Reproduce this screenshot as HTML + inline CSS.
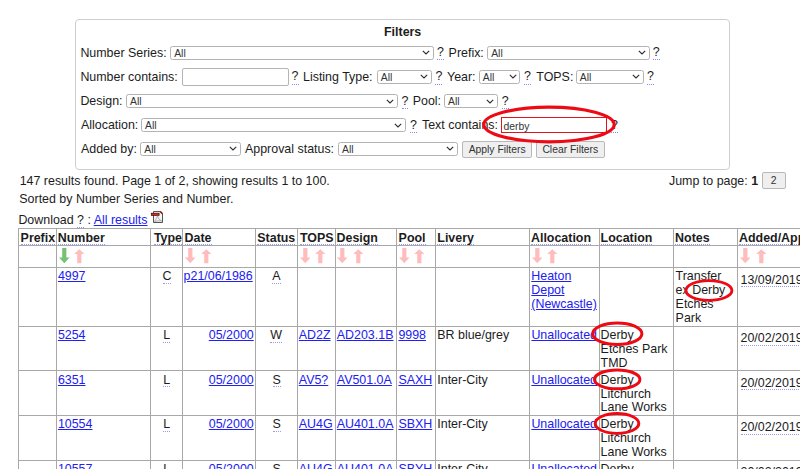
<!DOCTYPE html>
<html><head><meta charset="utf-8"><style>
html,body{margin:0;padding:0}
body{width:800px;height:469px;overflow:hidden;position:relative;background:#fff;font-family:"Liberation Sans",sans-serif;font-size:12.43px;color:#1c1c1c}
.t{position:absolute;white-space:pre}
.q{border-bottom:1px dotted #8c8cf0}
.lk{color:#2020f0;text-decoration:underline}
.ab,.ab2,.ab3{border-bottom:1px dotted #9a9af0}
.ab3{padding-right:80px}
.sel{position:absolute;box-sizing:border-box;border:1px solid #b3b3b3;border-radius:2.5px;background:#fff;font-size:10.36px;color:#222}
.inp{position:absolute;box-sizing:border-box;border:1px solid #b5b5b5;border-radius:2px;background:#fff;font-size:10.36px}
.inpr{position:absolute;box-sizing:border-box;border:1.4px solid #e0141e;background:#fff;font-size:10.36px;color:#333}
.btn{position:absolute;box-sizing:border-box;border:1px solid #b8b8b8;border-radius:2px;background:#efefef;font-size:10.36px;text-align:center;color:#333}
</style></head><body>
<div style="position:absolute;left:75.00px;top:18.50px;width:655.00px;height:151.00px;box-sizing:border-box;border:1px solid #cfcfcf;border-radius:4px"></div>
<span class="t" style="left:384.00px;top:25.05px;line-height:14.282px;font-weight:bold;">Filters</span>
<span class="t" style="left:80.40px;top:45.55px;line-height:14.282px;">Number Series:</span>
<div class="sel" style="left:170.20px;top:45.60px;width:263.60px;height:14.25px"><svg width="8" height="5" viewBox="0 0 8 5" style="position:absolute;right:2.9px;top:3.425px"><path d="M0.8 0.9 L4 4 L7.2 0.9" fill="none" stroke="#2a2a2a" stroke-width="1.1"/></svg></div>
<span class="t" style="left:174.20px;top:47.61px;font-size:10.36px;line-height:11.904px;color:#333;">All</span>
<span class="t q" style="left:437.00px;top:46.04px;line-height:13.3px;">?</span>
<span class="t" style="left:448.60px;top:45.55px;line-height:14.282px;">Prefix:</span>
<div class="sel" style="left:487.20px;top:45.60px;width:162.90px;height:14.25px"><svg width="8" height="5" viewBox="0 0 8 5" style="position:absolute;right:2.9px;top:3.425px"><path d="M0.8 0.9 L4 4 L7.2 0.9" fill="none" stroke="#2a2a2a" stroke-width="1.1"/></svg></div>
<span class="t" style="left:491.20px;top:47.61px;font-size:10.36px;line-height:11.904px;color:#333;">All</span>
<span class="t q" style="left:652.70px;top:46.04px;line-height:13.3px;">?</span>
<span class="t" style="left:80.40px;top:69.85px;line-height:14.282px;">Number contains:</span>
<div class="inp" style="left:181.80px;top:68.00px;width:107.20px;height:17.60px"></div>
<span class="t q" style="left:291.60px;top:70.34px;line-height:13.3px;">?</span>
<span class="t" style="left:303.00px;top:69.85px;line-height:14.282px;">Listing Type:</span>
<div class="sel" style="left:376.85px;top:69.90px;width:54.90px;height:14.25px"><svg width="8" height="5" viewBox="0 0 8 5" style="position:absolute;right:2.9px;top:3.425px"><path d="M0.8 0.9 L4 4 L7.2 0.9" fill="none" stroke="#2a2a2a" stroke-width="1.1"/></svg></div>
<span class="t" style="left:380.85px;top:71.91px;font-size:10.36px;line-height:11.904px;color:#333;">All</span>
<span class="t q" style="left:435.40px;top:70.34px;line-height:13.3px;">?</span>
<span class="t" style="left:447.00px;top:69.85px;line-height:14.282px;">Year:</span>
<div class="sel" style="left:478.80px;top:69.90px;width:41.70px;height:14.25px"><svg width="8" height="5" viewBox="0 0 8 5" style="position:absolute;right:2.9px;top:3.425px"><path d="M0.8 0.9 L4 4 L7.2 0.9" fill="none" stroke="#2a2a2a" stroke-width="1.1"/></svg></div>
<span class="t" style="left:482.80px;top:71.91px;font-size:10.36px;line-height:11.904px;color:#333;">All</span>
<span class="t q" style="left:524.00px;top:70.34px;line-height:13.3px;">?</span>
<span class="t" style="left:536.30px;top:69.85px;line-height:14.282px;">TOPS:</span>
<div class="sel" style="left:575.80px;top:69.90px;width:68.35px;height:14.25px"><svg width="8" height="5" viewBox="0 0 8 5" style="position:absolute;right:2.9px;top:3.425px"><path d="M0.8 0.9 L4 4 L7.2 0.9" fill="none" stroke="#2a2a2a" stroke-width="1.1"/></svg></div>
<span class="t" style="left:579.80px;top:71.91px;font-size:10.36px;line-height:11.904px;color:#333;">All</span>
<span class="t q" style="left:647.00px;top:70.34px;line-height:13.3px;">?</span>
<span class="t" style="left:80.40px;top:94.05px;line-height:14.282px;">Design:</span>
<div class="sel" style="left:126.00px;top:94.10px;width:271.70px;height:14.25px"><svg width="8" height="5" viewBox="0 0 8 5" style="position:absolute;right:2.9px;top:3.425px"><path d="M0.8 0.9 L4 4 L7.2 0.9" fill="none" stroke="#2a2a2a" stroke-width="1.1"/></svg></div>
<span class="t" style="left:130.00px;top:96.11px;font-size:10.36px;line-height:11.904px;color:#333;">All</span>
<span class="t q" style="left:401.50px;top:94.54px;line-height:13.3px;">?</span>
<span class="t" style="left:412.70px;top:94.05px;line-height:14.282px;">Pool:</span>
<div class="sel" style="left:444.10px;top:94.10px;width:53.90px;height:14.25px"><svg width="8" height="5" viewBox="0 0 8 5" style="position:absolute;right:2.9px;top:3.425px"><path d="M0.8 0.9 L4 4 L7.2 0.9" fill="none" stroke="#2a2a2a" stroke-width="1.1"/></svg></div>
<span class="t" style="left:448.10px;top:96.11px;font-size:10.36px;line-height:11.904px;color:#333;">All</span>
<span class="t q" style="left:501.80px;top:94.54px;line-height:13.3px;">?</span>
<span class="t" style="left:81.00px;top:118.15px;line-height:14.282px;">Allocation:</span>
<div class="sel" style="left:141.00px;top:118.20px;width:264.75px;height:14.25px"><svg width="8" height="5" viewBox="0 0 8 5" style="position:absolute;right:2.9px;top:3.425000000000007px"><path d="M0.8 0.9 L4 4 L7.2 0.9" fill="none" stroke="#2a2a2a" stroke-width="1.1"/></svg></div>
<span class="t" style="left:145.00px;top:120.21px;font-size:10.36px;line-height:11.904px;color:#333;">All</span>
<span class="t q" style="left:409.90px;top:118.64px;line-height:13.3px;">?</span>
<span class="t" style="left:422.00px;top:118.15px;line-height:14.282px;">Text contains:</span>
<div class="inpr" style="left:500.60px;top:116.90px;width:106.70px;height:16.20px"></div>
<span class="t" style="left:503.60px;top:120.66px;font-size:10.36px;line-height:11.904px;color:#333;">derby</span>
<span class="t q" style="left:611.00px;top:118.64px;line-height:13.3px;">?</span>
<span class="t" style="left:81.00px;top:141.85px;line-height:14.282px;">Added by:</span>
<div class="sel" style="left:140.30px;top:141.90px;width:100.70px;height:14.25px"><svg width="8" height="5" viewBox="0 0 8 5" style="position:absolute;right:2.9px;top:3.425px"><path d="M0.8 0.9 L4 4 L7.2 0.9" fill="none" stroke="#2a2a2a" stroke-width="1.1"/></svg></div>
<span class="t" style="left:144.30px;top:143.91px;font-size:10.36px;line-height:11.904px;color:#333;">All</span>
<span class="t" style="left:245.00px;top:141.85px;line-height:14.282px;">Approval status:</span>
<div class="sel" style="left:338.10px;top:141.90px;width:120.05px;height:14.25px"><svg width="8" height="5" viewBox="0 0 8 5" style="position:absolute;right:2.9px;top:3.425px"><path d="M0.8 0.9 L4 4 L7.2 0.9" fill="none" stroke="#2a2a2a" stroke-width="1.1"/></svg></div>
<span class="t" style="left:342.10px;top:143.91px;font-size:10.36px;line-height:11.904px;color:#333;">All</span>
<div class="btn" style="left:462.00px;top:141.20px;width:70.30px;height:16.75px;line-height:16.75px">Apply Filters</div>
<div class="btn" style="left:535.80px;top:141.20px;width:69.00px;height:16.75px;line-height:16.75px">Clear Filters</div>
<span class="t" style="left:19.70px;top:173.55px;line-height:14.282px;">147 results found. Page 1 of 2, showing results 1 to 100.</span>
<span class="t" style="left:19.30px;top:192.35px;line-height:14.282px;">Sorted by Number Series and Number.</span>
<span class="t" style="left:18.40px;top:212.55px;line-height:14.282px;">Download <span class="q">?</span> : <span class="lk">All results</span></span>
<span class="t" style="left:669.00px;top:173.65px;line-height:14.282px;">Jump to page: <b>1</b></span>
<div class="btn" style="left:761.50px;top:172.40px;width:24.50px;height:16.40px;line-height:16.40px">2</div>
<svg style="position:absolute;left:150px;top:210px" width="14" height="14" viewBox="0 0 14 14">
<path d="M3.5 1.5 H10.5 L12.5 3.5 V12.5 H3.5 Z" fill="#f4f4f4" stroke="#555" stroke-width="1"/>
<path d="M10.2 1.5 L12.5 3.8" stroke="#8a1010" stroke-width="1.6"/>
<rect x="1.3" y="3.2" width="7.8" height="2.2" fill="#d8261a" stroke="#3a0a0a" stroke-width="0.7"/>
<path d="M4.6 11.6 C6 9 7.2 7 7.6 5.8 C8 8 9.5 10 11.6 11 C9 10.6 7 10.8 4.6 11.6 Z" fill="none" stroke="#9a9a9a" stroke-width="0.8"/>
</svg>
<div style="position:absolute;left:17.90px;top:228.00px;width:1.00px;height:241.00px;background:#a8a8a8"></div>
<div style="position:absolute;left:55.90px;top:228.00px;width:1.00px;height:241.00px;background:#a8a8a8"></div>
<div style="position:absolute;left:150.20px;top:228.00px;width:1.00px;height:241.00px;background:#a8a8a8"></div>
<div style="position:absolute;left:181.80px;top:228.00px;width:1.00px;height:241.00px;background:#a8a8a8"></div>
<div style="position:absolute;left:255.00px;top:228.00px;width:1.00px;height:241.00px;background:#a8a8a8"></div>
<div style="position:absolute;left:297.00px;top:228.00px;width:1.00px;height:241.00px;background:#a8a8a8"></div>
<div style="position:absolute;left:334.50px;top:228.00px;width:1.00px;height:241.00px;background:#a8a8a8"></div>
<div style="position:absolute;left:395.70px;top:228.00px;width:1.00px;height:241.00px;background:#a8a8a8"></div>
<div style="position:absolute;left:435.00px;top:228.00px;width:1.00px;height:241.00px;background:#a8a8a8"></div>
<div style="position:absolute;left:529.00px;top:228.00px;width:1.00px;height:241.00px;background:#a8a8a8"></div>
<div style="position:absolute;left:598.70px;top:228.00px;width:1.00px;height:241.00px;background:#a8a8a8"></div>
<div style="position:absolute;left:673.10px;top:228.00px;width:1.00px;height:241.00px;background:#a8a8a8"></div>
<div style="position:absolute;left:737.10px;top:228.00px;width:1.00px;height:241.00px;background:#a8a8a8"></div>
<div style="position:absolute;left:17.90px;top:228.00px;width:782.10px;height:1.00px;background:#a8a8a8"></div>
<div style="position:absolute;left:17.90px;top:245.25px;width:782.10px;height:1.00px;background:#a8a8a8"></div>
<div style="position:absolute;left:17.90px;top:266.90px;width:782.10px;height:1.00px;background:#a8a8a8"></div>
<div style="position:absolute;left:17.90px;top:325.80px;width:782.10px;height:1.00px;background:#a8a8a8"></div>
<div style="position:absolute;left:17.90px;top:370.10px;width:782.10px;height:1.00px;background:#a8a8a8"></div>
<div style="position:absolute;left:17.90px;top:414.70px;width:782.10px;height:1.00px;background:#a8a8a8"></div>
<div style="position:absolute;left:17.90px;top:459.50px;width:782.10px;height:1.00px;background:#a8a8a8"></div>
<span class="t ab" style="left:20.60px;top:231.59px;line-height:12.4px;font-weight:bold;">Prefix</span>
<span class="t ab" style="left:57.80px;top:231.59px;line-height:12.4px;font-weight:bold;">Number</span>
<span class="t ab" style="left:153.90px;top:231.59px;line-height:12.4px;font-weight:bold;">Type</span>
<span class="t ab" style="left:184.60px;top:231.59px;line-height:12.4px;font-weight:bold;">Date</span>
<span class="t ab" style="left:257.30px;top:231.59px;line-height:12.4px;font-weight:bold;">Status</span>
<span class="t ab" style="left:300.00px;top:231.59px;line-height:12.4px;font-weight:bold;">TOPS</span>
<span class="t ab" style="left:336.50px;top:231.59px;line-height:12.4px;font-weight:bold;">Design</span>
<span class="t ab" style="left:398.60px;top:231.59px;line-height:12.4px;font-weight:bold;">Pool</span>
<span class="t ab" style="left:437.30px;top:231.59px;line-height:12.4px;font-weight:bold;">Livery</span>
<span class="t ab" style="left:531.00px;top:231.59px;line-height:12.4px;font-weight:bold;">Allocation</span>
<span class="t ab" style="left:600.60px;top:231.59px;line-height:12.4px;font-weight:bold;">Location</span>
<span class="t ab" style="left:675.10px;top:231.59px;line-height:12.4px;font-weight:bold;">Notes</span>
<span class="t ab" style="left:739.00px;top:231.59px;line-height:12.4px;font-weight:bold;">Added/Approved</span>
<svg style="position:absolute;left:58.8px;top:248.0px" width="11" height="16" viewBox="0 0 11 16"><path d="M3.2 0 H7.4 V9.5 H10.5 L5.3 15.2 L0 9.5 H3.2 Z" fill="#74c274"/></svg>
<svg style="position:absolute;left:74.3px;top:248.7px" width="11" height="16" viewBox="0 0 11 16"><path d="M5.3 0.2 L10.4 5 H7.4 V14.3 H3.2 V5 H0.2 Z" fill="#ffbcbc"/></svg>
<svg style="position:absolute;left:185.0px;top:248.0px" width="11" height="16" viewBox="0 0 11 16"><path d="M3.2 0 H7.4 V9.5 H10.5 L5.3 15.2 L0 9.5 H3.2 Z" fill="#ffbcbc"/></svg>
<svg style="position:absolute;left:200.5px;top:248.7px" width="11" height="16" viewBox="0 0 11 16"><path d="M5.3 0.2 L10.4 5 H7.4 V14.3 H3.2 V5 H0.2 Z" fill="#ffbcbc"/></svg>
<svg style="position:absolute;left:299.6px;top:248.0px" width="11" height="16" viewBox="0 0 11 16"><path d="M3.2 0 H7.4 V9.5 H10.5 L5.3 15.2 L0 9.5 H3.2 Z" fill="#ffbcbc"/></svg>
<svg style="position:absolute;left:315.1px;top:248.7px" width="11" height="16" viewBox="0 0 11 16"><path d="M5.3 0.2 L10.4 5 H7.4 V14.3 H3.2 V5 H0.2 Z" fill="#ffbcbc"/></svg>
<svg style="position:absolute;left:337.3px;top:248.0px" width="11" height="16" viewBox="0 0 11 16"><path d="M3.2 0 H7.4 V9.5 H10.5 L5.3 15.2 L0 9.5 H3.2 Z" fill="#ffbcbc"/></svg>
<svg style="position:absolute;left:352.8px;top:248.7px" width="11" height="16" viewBox="0 0 11 16"><path d="M5.3 0.2 L10.4 5 H7.4 V14.3 H3.2 V5 H0.2 Z" fill="#ffbcbc"/></svg>
<svg style="position:absolute;left:398.8px;top:248.0px" width="11" height="16" viewBox="0 0 11 16"><path d="M3.2 0 H7.4 V9.5 H10.5 L5.3 15.2 L0 9.5 H3.2 Z" fill="#ffbcbc"/></svg>
<svg style="position:absolute;left:414.3px;top:248.7px" width="11" height="16" viewBox="0 0 11 16"><path d="M5.3 0.2 L10.4 5 H7.4 V14.3 H3.2 V5 H0.2 Z" fill="#ffbcbc"/></svg>
<svg style="position:absolute;left:531.8px;top:248.0px" width="11" height="16" viewBox="0 0 11 16"><path d="M3.2 0 H7.4 V9.5 H10.5 L5.3 15.2 L0 9.5 H3.2 Z" fill="#ffbcbc"/></svg>
<svg style="position:absolute;left:547.3px;top:248.7px" width="11" height="16" viewBox="0 0 11 16"><path d="M5.3 0.2 L10.4 5 H7.4 V14.3 H3.2 V5 H0.2 Z" fill="#ffbcbc"/></svg>
<svg style="position:absolute;left:740.1px;top:248.0px" width="11" height="16" viewBox="0 0 11 16"><path d="M3.2 0 H7.4 V9.5 H10.5 L5.3 15.2 L0 9.5 H3.2 Z" fill="#ffbcbc"/></svg>
<svg style="position:absolute;left:755.6px;top:248.7px" width="11" height="16" viewBox="0 0 11 16"><path d="M5.3 0.2 L10.4 5 H7.4 V14.3 H3.2 V5 H0.2 Z" fill="#ffbcbc"/></svg>
<span class="t lk" style="left:57.90px;top:269.25px;line-height:14.282px;">4997</span>
<span class="t ab2" style="left:162.50px;top:270.09px;line-height:12.6px;">C</span>
<span class="t lk" style="left:183.60px;top:269.25px;line-height:14.282px;">p21/06/1986</span>
<span class="t ab2" style="left:272.30px;top:270.09px;line-height:12.6px;">A</span>
<span class="t lk" style="left:531.30px;top:269.25px;line-height:14.282px;">Heaton</span>
<span class="t lk" style="left:531.30px;top:283.10px;line-height:14.282px;">Depot</span>
<span class="t lk" style="left:531.30px;top:296.95px;line-height:14.282px;">(Newcastle)</span>
<span class="t" style="left:675.60px;top:269.25px;line-height:14.282px;">Transfer</span>
<span class="t" style="left:675.60px;top:283.10px;line-height:14.282px;">ex Derby</span>
<span class="t" style="left:675.60px;top:296.95px;line-height:14.282px;">Etches</span>
<span class="t" style="left:675.60px;top:310.80px;line-height:14.282px;">Park</span>
<span class="t ab3" style="left:740.50px;top:273.89px;line-height:12.4px;">13/09/2019</span>
<span class="t lk" style="left:57.90px;top:328.25px;line-height:14.282px;">5254</span>
<span class="t ab2" style="left:163.30px;top:329.09px;line-height:12.6px;">L</span>
<span class="t lk" style="left:208.80px;top:328.25px;line-height:14.282px;">05/2000</span>
<span class="t ab2" style="left:270.20px;top:329.09px;line-height:12.6px;">W</span>
<span class="t lk" style="left:298.80px;top:328.25px;line-height:14.282px;">AD2Z</span>
<span class="t lk" style="left:336.80px;top:328.25px;line-height:14.282px;">AD203.1B</span>
<span class="t lk" style="left:398.40px;top:328.25px;line-height:14.282px;">9998</span>
<span class="t" style="left:437.30px;top:328.25px;line-height:14.282px;">BR blue/grey</span>
<span class="t lk" style="left:531.40px;top:328.25px;line-height:14.282px;">Unallocated</span>
<span class="t" style="left:600.60px;top:328.25px;line-height:14.282px;">Derby</span>
<span class="t" style="left:600.60px;top:342.10px;line-height:14.282px;">Etches Park</span>
<span class="t" style="left:600.60px;top:355.95px;line-height:14.282px;">TMD</span>
<span class="t ab3" style="left:740.50px;top:332.09px;line-height:12.6px;">20/02/2019</span>
<span class="t lk" style="left:57.90px;top:372.75px;line-height:14.282px;">6351</span>
<span class="t ab2" style="left:163.30px;top:373.59px;line-height:12.6px;">L</span>
<span class="t lk" style="left:208.80px;top:372.75px;line-height:14.282px;">05/2000</span>
<span class="t ab2" style="left:272.60px;top:373.59px;line-height:12.6px;">S</span>
<span class="t lk" style="left:298.80px;top:372.75px;line-height:14.282px;">AV5?</span>
<span class="t lk" style="left:336.80px;top:372.75px;line-height:14.282px;">AV501.0A</span>
<span class="t lk" style="left:398.40px;top:372.75px;line-height:14.282px;">SAXH</span>
<span class="t" style="left:437.30px;top:372.75px;line-height:14.282px;">Inter-City</span>
<span class="t lk" style="left:531.40px;top:372.75px;line-height:14.282px;">Unallocated</span>
<span class="t" style="left:600.60px;top:372.75px;line-height:14.282px;">Derby</span>
<span class="t" style="left:600.60px;top:386.60px;line-height:14.282px;">Litchurch</span>
<span class="t" style="left:600.60px;top:400.45px;line-height:14.282px;">Lane Works</span>
<span class="t ab3" style="left:740.50px;top:376.59px;line-height:12.6px;">20/02/2019</span>
<span class="t lk" style="left:57.90px;top:417.35px;line-height:14.282px;">10554</span>
<span class="t ab2" style="left:163.30px;top:418.19px;line-height:12.6px;">L</span>
<span class="t lk" style="left:208.80px;top:417.35px;line-height:14.282px;">05/2000</span>
<span class="t ab2" style="left:272.60px;top:418.19px;line-height:12.6px;">S</span>
<span class="t lk" style="left:298.80px;top:417.35px;line-height:14.282px;">AU4G</span>
<span class="t lk" style="left:336.80px;top:417.35px;line-height:14.282px;">AU401.0A</span>
<span class="t lk" style="left:398.40px;top:417.35px;line-height:14.282px;">SBXH</span>
<span class="t" style="left:437.30px;top:417.35px;line-height:14.282px;">Inter-City</span>
<span class="t lk" style="left:531.40px;top:417.35px;line-height:14.282px;">Unallocated</span>
<span class="t" style="left:600.60px;top:417.35px;line-height:14.282px;">Derby</span>
<span class="t" style="left:600.60px;top:431.20px;line-height:14.282px;">Litchurch</span>
<span class="t" style="left:600.60px;top:445.05px;line-height:14.282px;">Lane Works</span>
<span class="t ab3" style="left:740.50px;top:421.19px;line-height:12.6px;">20/02/2019</span>
<span class="t lk" style="left:57.90px;top:462.15px;line-height:14.282px;">10557</span>
<span class="t ab2" style="left:163.30px;top:462.99px;line-height:12.6px;">L</span>
<span class="t lk" style="left:208.80px;top:462.15px;line-height:14.282px;">05/2000</span>
<span class="t ab2" style="left:272.60px;top:462.99px;line-height:12.6px;">S</span>
<span class="t lk" style="left:298.80px;top:462.15px;line-height:14.282px;">AU4G</span>
<span class="t lk" style="left:336.80px;top:462.15px;line-height:14.282px;">AU401.0A</span>
<span class="t lk" style="left:398.40px;top:462.15px;line-height:14.282px;">SBYH</span>
<span class="t" style="left:437.30px;top:462.15px;line-height:14.282px;">Inter-City</span>
<span class="t lk" style="left:531.40px;top:462.15px;line-height:14.282px;">Unallocated</span>
<span class="t" style="left:600.60px;top:462.15px;line-height:14.282px;">Derby</span>
<span class="t" style="left:600.60px;top:476.00px;line-height:14.282px;">Litchurch</span>
<span class="t" style="left:600.60px;top:489.85px;line-height:14.282px;">Lane Works</span>
<span class="t ab3" style="left:740.50px;top:465.99px;line-height:12.6px;">20/02/2019</span>
<svg style="position:absolute;left:0;top:0" width="800" height="469"><ellipse cx="549.0" cy="124.5" rx="65.2" ry="17.3" fill="none" stroke="#ee0a14" stroke-width="3.2"/><ellipse cx="708.9" cy="290.5" rx="23.0" ry="9.9" fill="none" stroke="#ee0a14" stroke-width="2.9"/><ellipse cx="617.3" cy="333.7" rx="24.6" ry="10.8" fill="none" stroke="#ee0a14" stroke-width="3.0"/><ellipse cx="617.2" cy="379.4" rx="22.7" ry="9.4" fill="none" stroke="#ee0a14" stroke-width="3.0"/><ellipse cx="617.0" cy="423.5" rx="21.8" ry="9.9" fill="none" stroke="#ee0a14" stroke-width="3.0"/></svg>
</body></html>
